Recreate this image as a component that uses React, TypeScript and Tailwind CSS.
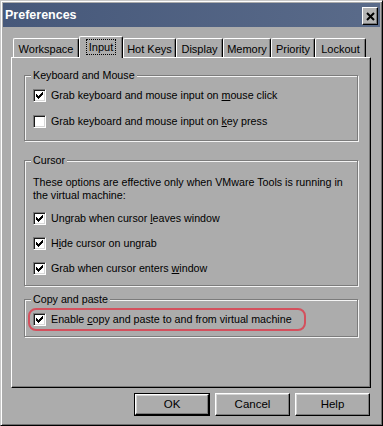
import React from "react";

const CHECK: [number, number][] = [
  [6, 0], [5, 1], [6, 1], [0, 2], [4, 2], [5, 2], [6, 2],
  [0, 3], [1, 3], [3, 3], [4, 3], [5, 3],
  [0, 4], [1, 4], [2, 4], [3, 4], [4, 4],
  [1, 5], [2, 5], [3, 5], [2, 6],
];
const checkPath = CHECK.map(([x, y]) => `M${x} ${y}h1v1h-1z`).join("");

function Box({ checked }: { checked: boolean }) {
  return (
    <span className="w-[13px] h-[13px] shrink-0 bg-white border border-t-[#7a7a7a] border-l-[#7a7a7a] border-r-white border-b-white shadow-[inset_1px_1px_0_#1a1a1a,inset_-1px_-1px_0_#d8d8d8] flex items-center justify-center">
      {checked && (
        <svg width="7" height="7" viewBox="0 0 7 7" shapeRendering="crispEdges">
          <path d={checkPath} fill="#000" />
        </svg>
      )}
    </span>
  );
}

function Row({ checked, children }: { checked: boolean; children: React.ReactNode }) {
  return (
    <div className="flex items-center gap-[5px] h-[13px]">
      <Box checked={checked} />
      <span className="whitespace-nowrap leading-[13px]">{children}</span>
    </div>
  );
}

function Group({ label, className, children }: { label: string; className: string; children: React.ReactNode }) {
  return (
    <div className={`relative border border-[#7c7c7c] shadow-[inset_1px_1px_0_#f4f4f4,1px_1px_0_#f4f4f4] ${className}`}>
      <span className="absolute -top-[7px] left-[6px] px-[2px] bg-[#acacac] leading-[13px] whitespace-nowrap">{label}</span>
      {children}
    </div>
  );
}

function Btn({ label, def }: { label: string; def?: boolean }) {
  return (
    <div className={def ? "w-[76px] h-[23px] border border-black flex" : "w-[75px] h-[23px] flex"}>
      <div className="flex-1 border border-t-white border-l-white border-r-black border-b-black shadow-[inset_-1px_-1px_0_#7a7a7a,inset_1px_1px_0_#d4d4d4] flex items-center justify-center text-[11.5px] leading-none">
        {label}
      </div>
    </div>
  );
}

const tabs = [
  { name: "Workspace", w: "w-[66px]" },
  { name: "Input", w: "w-[44px]", sel: true },
  { name: "Hot Keys", w: "w-[53px]" },
  { name: "Display", w: "w-[47px]" },
  { name: "Memory", w: "w-[48px]" },
  { name: "Priority", w: "w-[44px]" },
  { name: "Lockout", w: "w-[51px]" },
];

export default function App() {
  return (
    <div className="w-[383px] h-[426px] bg-[#acacac] border border-t-[#c8c8c8] border-l-[#c8c8c8] border-r-black border-b-black shadow-[inset_1px_1px_0_#ffffff,inset_-1px_-1px_0_#6e6e6e] p-[2px] flex flex-col text-[10.7px] text-black font-[family-name:'Liberation_Sans',Arial,sans-serif]">
      {/* Title bar */}
      <div className="h-[24px] flex items-start bg-linear-to-r from-[#46587a] to-[#5a6b8a] shrink-0">
        <span className="pl-[2px] pt-[5px] text-white font-bold text-[12.5px] leading-[14px]">Preferences</span>
        <div className="ml-auto mr-[2px] mt-[4px] w-[16px] h-[18px] bg-[#b4b4b4] border border-t-white border-l-white border-r-black border-b-black shadow-[inset_-1px_-1px_0_#7a7a7a] flex items-center justify-center">
          <svg width="9" height="9" viewBox="0 0 9 9">
            <path d="M1 1L8 8M8 1L1 8" stroke="#000" strokeWidth="2" />
          </svg>
        </div>
      </div>

      {/* Body */}
      <div className="flex flex-col pl-[8px] pr-[9px] pt-[9px]">
        {/* Tabs */}
        <div className="flex items-end h-[21px] pl-[2px] relative z-10 text-[11px]">
          {tabs.map((t) =>
            t.sel ? (
              <div
                key={t.name}
                className={`${t.w} h-[22px] -mb-[1px] bg-[#acacac] border-t border-l border-t-white border-l-white border-r border-r-black shadow-[inset_-1px_0_0_#7a7a7a] rounded-tl-[2px] rounded-tr-[2px] flex items-start justify-center pt-[2px]`}
              >
                <span className="border border-dotted border-black px-[2px] h-[16px] leading-[14px]">{t.name}</span>
              </div>
            ) : (
              <div
                key={t.name}
                className={`${t.w} h-[19px] bg-[#acacac] border-t border-l border-t-white border-l-white border-r border-r-black shadow-[inset_-1px_0_0_#7a7a7a] rounded-tl-[2px] rounded-tr-[2px] flex items-center justify-center`}
              >
                <span className="leading-[13px] pt-[2px]">{t.name}</span>
              </div>
            )
          )}
        </div>

        {/* Panel */}
        <div className="h-[331px] border border-t-white border-l-white border-r-black border-b-black shadow-[inset_-1px_-1px_0_#7a7a7a] px-[12px] pt-[17px] flex flex-col">
          <Group label="Keyboard and Mouse" className="h-[66px] pl-[8px] pt-[13px] flex flex-col gap-[13px]">
            <Row checked>
              Grab keyboard and mouse input on <u>m</u>ouse click
            </Row>
            <Row checked={false}>
              Grab keyboard and mouse input on <u>k</u>ey press
            </Row>
          </Group>

          <Group label="Cursor" className="mt-[19px] h-[126px] pl-[8px] pt-[15px] flex flex-col">
            <div className="leading-[13px] whitespace-nowrap">
              These options are effective only when VMware Tools is running in
              <br />
              the virtual machine:
            </div>
            <div className="mt-[10px] flex flex-col gap-[12px]">
              <Row checked>
                Ungrab when cursor <u>l</u>eaves window
              </Row>
              <Row checked>
                H<u>i</u>de cursor on ungrab
              </Row>
              <Row checked>
                Grab when cursor enters <u>w</u>indow
              </Row>
            </div>
          </Group>

          <Group label="Copy and paste" className="mt-[13px] h-[38px] pt-[8px] pl-[3px]">
            <div className="w-[278px] h-[23px] rounded-[8px] border-2 border-[#d4505d] flex items-center pl-[3px]">
              <Row checked>
                Enable <u>c</u>opy and paste to and from virtual machine
              </Row>
            </div>
          </Group>
        </div>

        {/* Buttons */}
        <div className="mt-[5px] flex justify-end gap-[5px] pr-[1px]">
          <Btn label="OK" def />
          <Btn label="Cancel" />
          <Btn label="Help" />
        </div>
      </div>
    </div>
  );
}
